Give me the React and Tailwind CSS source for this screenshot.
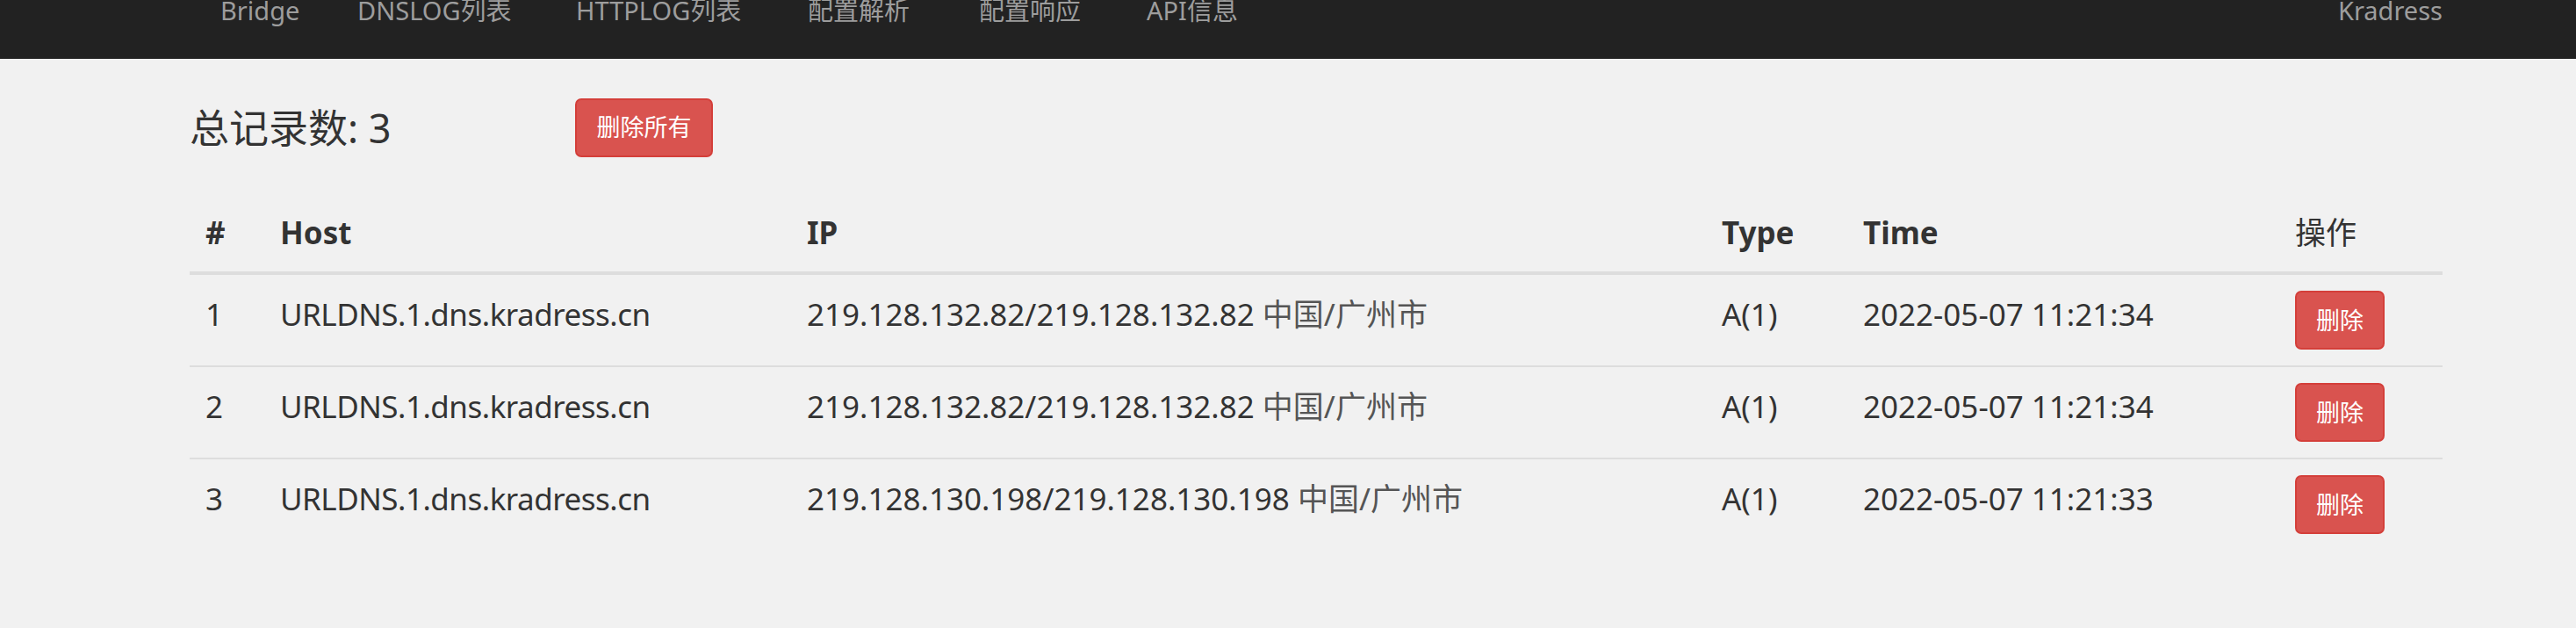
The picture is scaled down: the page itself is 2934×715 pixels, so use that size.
import { useState } from 'react';

const navLinks = [
  { label: 'Bridge', w: 'w-[156px]' },
  { label: 'DNSLOG列表', w: 'w-[249px]' },
  { label: 'HTTPLOG列表', w: 'w-[264px]' },
  { label: '配置解析', w: 'w-[195px]' },
  { label: '配置响应', w: 'w-[191px]' },
  { label: 'API信息', w: '' },
];

const initialRecords = [
  { id: 1, host: 'URLDNS.1.dns.kradress.cn', ip: '219.128.132.82/219.128.132.82', loc: '中国/广州市', type: 'A(1)', time: '2022-05-07 11:21:34' },
  { id: 2, host: 'URLDNS.1.dns.kradress.cn', ip: '219.128.132.82/219.128.132.82', loc: '中国/广州市', type: 'A(1)', time: '2022-05-07 11:21:34' },
  { id: 3, host: 'URLDNS.1.dns.kradress.cn', ip: '219.128.130.198/219.128.130.198', loc: '中国/广州市', type: 'A(1)', time: '2022-05-07 11:21:33' },
];

export default function App() {
  const [records, setRecords] = useState(initialRecords);

  const removeRecord = (id) => setRecords(records.filter(r => r.id !== id));

  return (
    <div className="min-h-screen bg-[#f1f1f1] text-[#333] font-['Noto_Sans','Noto_Sans_CJK_SC',sans-serif]">
      <nav className="h-[67px] bg-[#222] overflow-hidden">
        <div className="ml-[216px] w-[2566px] pl-[35px] flex text-[29px] leading-[24px] text-[#9d9d9d]">
          {navLinks.map(l => (
            <a key={l.label} className={`${l.w} shrink-0 whitespace-nowrap`}>{l.label}</a>
          ))}
          <a className="ml-auto whitespace-nowrap">Kradress</a>
        </div>
      </nav>

      <main className="ml-[216px] w-[2566px]">
        <div className="mt-[45px] h-[67px] flex items-center">
          <h3 className="w-[439px] text-[45px] leading-none whitespace-nowrap">总记录数: {records.length}</h3>
          <button
            onClick={() => setRecords([])}
            className="w-[157px] h-[67px] flex items-center justify-center rounded-[7px] border-2 border-[#d43f3a] bg-[#d9534f] text-white text-[27px]"
          >
            删除所有
          </button>
        </div>

        <table className="mt-[41px] w-full table-fixed border-separate border-spacing-0 text-[35px] leading-[53px]">
          <colgroup>
            <col className="w-[85px]" />
            <col className="w-[600px]" />
            <col className="w-[1042px]" />
            <col className="w-[161px]" />
            <col className="w-[492px]" />
            <col className="w-[186px]" />
          </colgroup>
          <thead>
            <tr className="text-left align-bottom">
              <th className="px-[18px] pt-[18px] pb-[18px] border-b-4 border-[#ddd] font-bold">#</th>
              <th className="px-[18px] pt-[18px] pb-[18px] border-b-4 border-[#ddd] font-bold">Host</th>
              <th className="px-[18px] pt-[18px] pb-[18px] border-b-4 border-[#ddd] font-bold">IP</th>
              <th className="px-[18px] pt-[18px] pb-[18px] border-b-4 border-[#ddd] font-bold">Type</th>
              <th className="px-[18px] pt-[18px] pb-[18px] border-b-4 border-[#ddd] font-bold">Time</th>
              <th className="px-[18px] pt-[18px] pb-[18px] border-b-4 border-[#ddd] font-normal">操作</th>
            </tr>
          </thead>
          <tbody>
            {records.map((r, i) => {
              const cell = `px-[18px] py-[18px] align-top whitespace-nowrap ${i > 0 ? 'border-t-2 border-[#ddd]' : ''}`;
              return (
                <tr key={r.id}>
                  <td className={cell}>{i + 1}</td>
                  <td className={`${cell} tracking-[-0.5px]`}>{r.host}</td>
                  <td className={cell}>{r.ip} <span className="text-[#555]">{r.loc}</span></td>
                  <td className={cell}>{r.type}</td>
                  <td className={cell}>{r.time}</td>
                  <td className={cell}>
                    <button
                      onClick={() => removeRecord(r.id)}
                      className="w-[102px] h-[67px] flex items-center justify-center rounded-[7px] border-2 border-[#d43f3a] bg-[#d9534f] text-white text-[27px] leading-none"
                    >
                      删除
                    </button>
                  </td>
                </tr>
              );
            })}
          </tbody>
        </table>
      </main>
    </div>
  );
}
